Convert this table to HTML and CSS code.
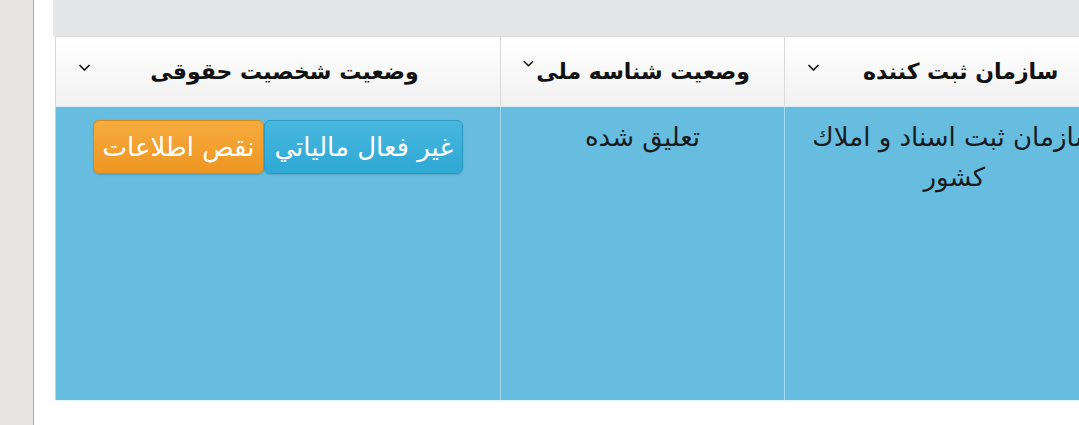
FILE: index.html
```html
<!DOCTYPE html>
<html lang="fa">
<head>
<meta charset="utf-8">
<link rel="stylesheet" href="styles.css">
</head>
<body>
<div class="page">
  <aside class="side"></aside>
  <div class="gutter"></div>
  <main class="main">
    <div class="topband"></div>
    <table class="grid" dir="rtl">
      <colgroup>
        <col class="c1"><col class="c2"><col class="c3">
      </colgroup>
      <thead>
        <tr>
          <th><div class="th"><span class="lbl">سازمان ثبت کننده</span><svg class="chev" viewBox="0 0 12 7"><path d="M1 1l5 5 5-5"/></svg></div></th>
          <th><div class="th tight"><span class="lbl">وصعیت شناسه ملی</span><svg class="chev up" viewBox="0 0 12 7"><path d="M1 1l5 5 5-5"/></svg></div></th>
          <th><div class="th"><span class="lbl">وضعیت شخصیت حقوقی</span><svg class="chev" viewBox="0 0 12 7"><path d="M1 1l5 5 5-5"/></svg></div></th>
        </tr>
      </thead>
      <tbody>
        <tr>
          <td class="txt">سازمان ثبت اسناد و املاك کشور</td>
          <td class="txt">تعلیق شده</td>
          <td class="badges"><span class="badge blue">غير فعال مالياتي</span><span class="badge orange">نقص اطلاعات</span></td>
        </tr>
      </tbody>
    </table>
  </main>
</div>
</body>
</html>
```

FILE: styles.css
```css
html, body {
  margin: 0;
  padding: 0;
  background: #fff;
  overflow: hidden;
  width: 1079px;
  height: 425px;
}
body {
  font-family: "DejaVu Sans", "Noto Sans", sans-serif;
}
.page {
  display: flex;
  height: 425px;
}
.side {
  width: 33px;
  flex: none;
  background: #e5e4e2;
  border-right: 1px solid #a4a4a4;
}
.gutter {
  width: 19px;
  flex: none;
  background: #fff;
}
.main {
  flex: none;
  width: 1070px;
  display: flex;
  flex-direction: column;
}
.topband {
  height: 36px;
  background: #e3e5e6;
}
.grid {
  border-collapse: collapse;
  table-layout: fixed;
  width: 1068px;
  margin-left: 2px;
  border-left: 1px solid #d6d6d6;
}
.c1 { width: 339px; }
.c2 { width: 284px; }
.c3 { width: 445px; }
th {
  height: 69px;
  padding: 0 22px;
  background: linear-gradient(#ffffff, #f1f1f1);
  border-top: 1px solid #dcdcdc;
  border-left: 1px solid #d9d9d9;
  border-bottom: 1px solid #d9eaf2;
  font-weight: bold;
  font-size: 22px;
  color: #111;
}
.th {
  display: flex;
  align-items: center;
}
.lbl {
  flex: 1;
  text-align: center;
  white-space: nowrap;
}
.th.tight .lbl { text-align: right; padding-right: 12px; }
.chev {
  width: 13px;
  height: 7px;
  flex: none;
  fill: none;
  stroke: #111;
  stroke-width: 1.6;
  margin-bottom: 8px;
}
.chev.up { margin-bottom: 16px; margin-right: -2px; width: 11px; }
td {
  height: 273px;
  vertical-align: top;
  background: #66bde0;
  border-left: 1px solid #a9dbee;
  border-bottom: 1px solid #e2f6fd;
  color: #1b1b1b;
  font-size: 26px;
  line-height: 40px;
  padding: 10px 14px;
  text-align: center;
}
.badges {
  padding: 13px 37px 0 0;
  height: 280px;
  text-align: right;
}
.badge {
  display: inline-block;
  height: 54px;
  line-height: 52px;
  padding: 0 9px;
  font-size: 26px;
  color: #fff;
  border-radius: 6px;
  vertical-align: top;
  box-sizing: border-box;
}
.blue {
  background: linear-gradient(#48b7df, #2ea8d4);
  border: 1px solid #2b9ac4;
  box-shadow: 0 1px 2px rgba(0,0,0,0.15);
}
.orange {
  background: linear-gradient(#f6ab3d, #ee9622);
  border: 1px solid #d8891e;
  box-shadow: 0 1px 2px rgba(0,0,0,0.15);
}
```
